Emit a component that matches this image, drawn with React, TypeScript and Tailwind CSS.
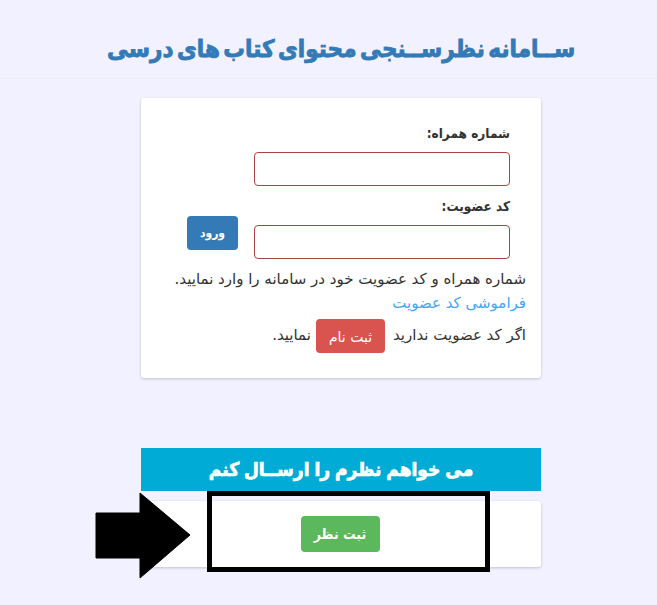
const bodyFont = "font-['DejaVu_Sans',sans-serif]";
const boldFont = "font-['DejaVu_Sans_Condensed','DejaVu_Sans',sans-serif] font-bold";

function Field({ label }: { label: string }) {
  return (
    <div>
      <label className={`block h-[27px] text-[13.5px] leading-[16px] text-[#333] ${boldFont}`}>{label}</label>
      <input type="text" className="block w-full h-[34px] rounded border border-[#a94442] bg-white" />
    </div>
  );
}

export default function App() {
  return (
    <div dir="rtl" className={`relative h-[605px] overflow-hidden bg-[#f2f1ff] ${bodyFont} text-[15px] text-[#333]`}>
      {/* Header */}
      <div className="h-[79px] border-b border-[#eeeef5] pt-[32px] pl-[25px] text-center">
        <h1 className={`text-[24px] leading-[34px] text-[#337ab7] [word-spacing:-4px] [-webkit-text-stroke:0.8px_#337ab7] ${boldFont}`}>
          ســامانه نظرســنجی محتوای کتاب های درسی
        </h1>
      </div>

      {/* Login card */}
      <div className="mt-[19px] mr-[116px] h-[280px] w-[400px] rounded-[3px] bg-white pt-[27px] pr-[15px] shadow-[0_1px_3px_rgba(0,0,0,0.2)]">
        <div className="flex items-end pr-[16px]">
          <div className="flex w-[256px] flex-col gap-[12px]">
            <Field label="شماره همراه:" />
            <Field label="کد عضویت:" />
          </div>
          <button className={`mr-[16px] mb-[9px] h-[34px] w-[51px] rounded bg-[#337ab7] text-[12px] text-white ${boldFont}`}>
            ورود
          </button>
        </div>

        <p className="mt-[8px] leading-[24px]">شماره همراه و کد عضویت خود در سامانه را وارد نمایید.</p>
        <a href="#" className="block leading-[24px] text-[#42a5f5]">فراموشی کد عضویت</a>
        <div className="mt-[2px] flex items-center gap-[5px] leading-[37px]">
          <span>اگر کد عضویت ندارید</span>
          <button className="mr-[3px] h-[34px] w-[69px] rounded bg-[#d9534f] text-[14px] text-white">ثبت نام</button>
          <span>نمایید.</span>
        </div>
      </div>

      {/* Feedback section */}
      <div className="mt-[70px] mr-[116px] w-[400px]">
        <div className={`h-[43px] bg-[#00acd6] text-center text-[19px] leading-[43px] text-white [word-spacing:-1px] [-webkit-text-stroke:0.7px_#fff] ${boldFont}`}>
          می خواهم نظرم را ارســال کنم
        </div>
        <div className="mt-[10px] flex h-[66px] items-center justify-center rounded-[3px] bg-white shadow-[0_1px_3px_rgba(0,0,0,0.2)]">
          <button className={`mr-[2px] h-[36px] w-[79px] rounded bg-[#5cb85c] text-[14px] text-white ${boldFont}`}>ثبت نظر</button>
        </div>
      </div>

      {/* Hand-drawn annotation on top of the page */}
      <div className="pointer-events-none absolute top-[491px] left-[207px] h-[81px] w-[283px] border-[5px] border-black" />
      <svg className="pointer-events-none absolute top-[492px] left-[94px]" width="98" height="88" viewBox="0 0 98 88">
        <path d="M2 21H46V1L96 43L46 86V66H2Z" fill="#000" stroke="#000" strokeWidth="1" strokeLinejoin="round" />
      </svg>
    </div>
  );
}
